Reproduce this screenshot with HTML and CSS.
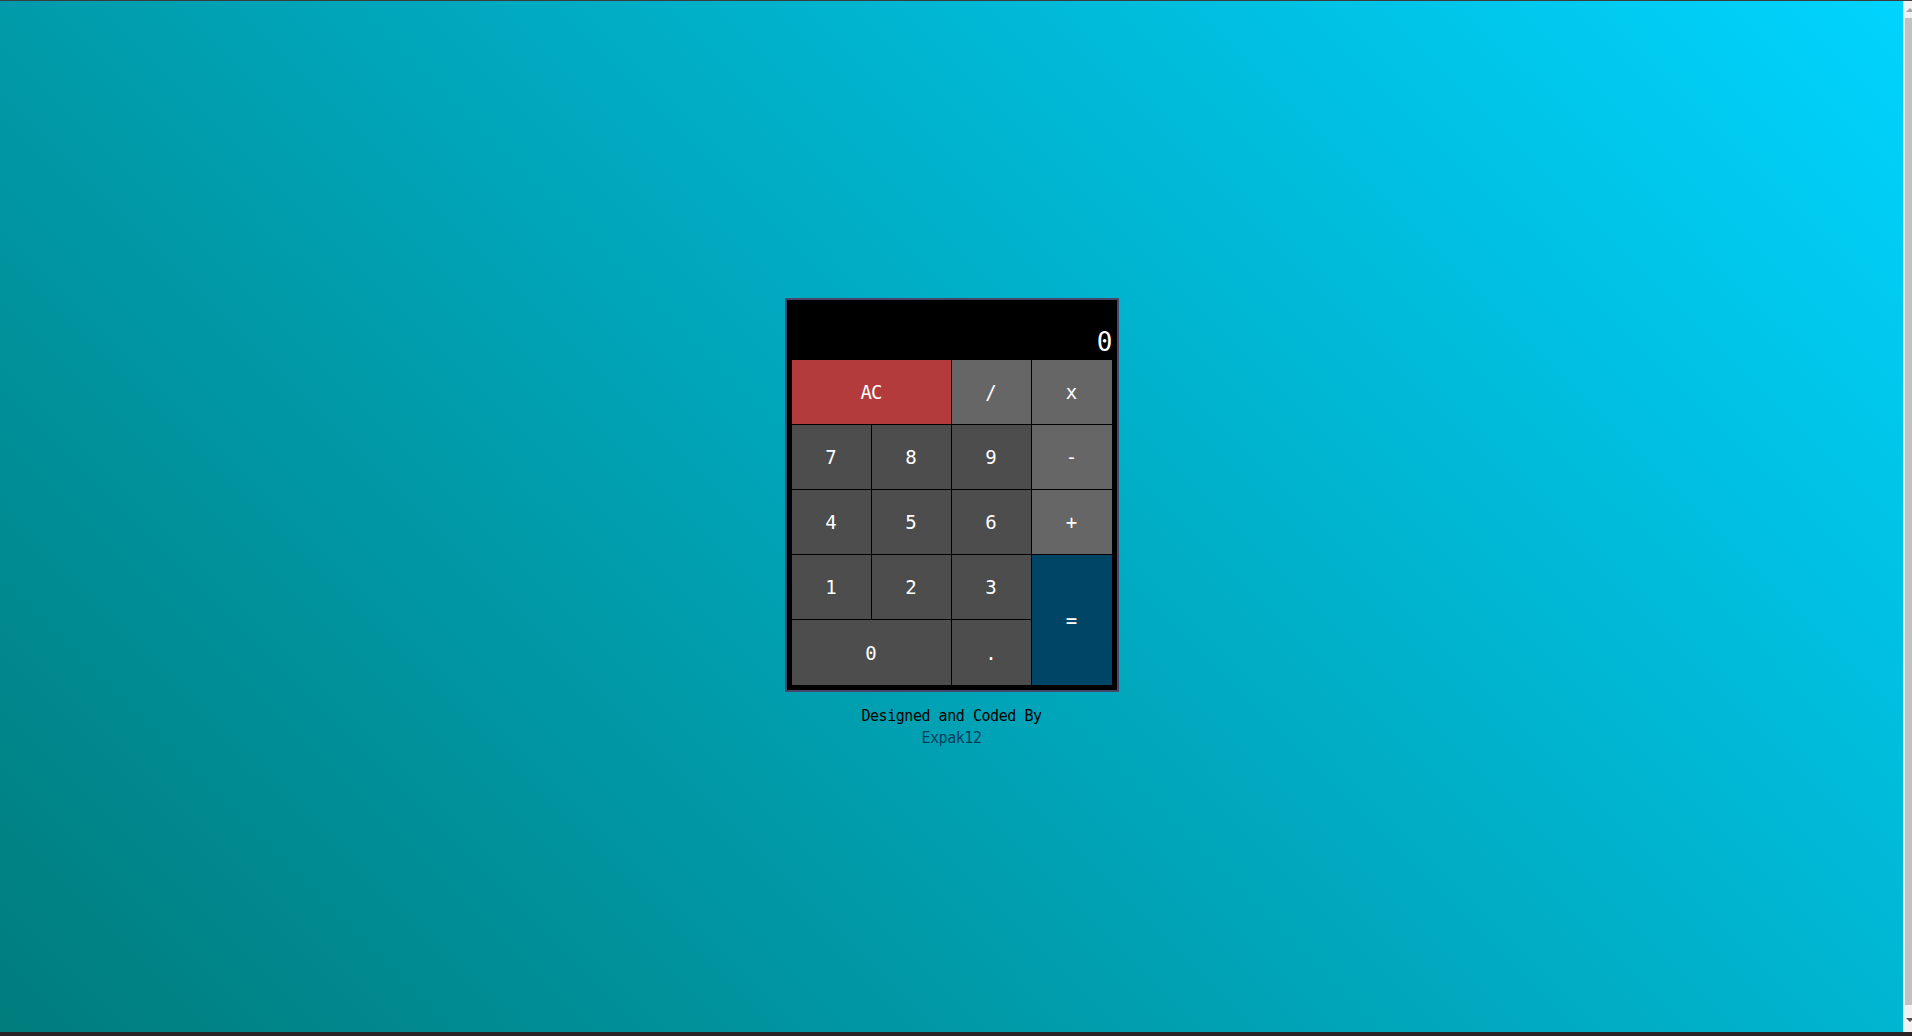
FILE: index.html
```html
<!DOCTYPE html>
<html lang="en">
<head>
<meta charset="utf-8">
<title>JavaScript Calculator</title>
<link rel="stylesheet" href="styles.css">
</head>
<body>
<div class="frame">
  <div class="page">
    <div class="calculator">
      <div class="formula-screen"></div>
      <div class="output-screen">0</div>
      <div class="keys">
        <button class="key key-clear key-wide">AC</button>
        <button class="key key-op">/</button>
        <button class="key key-op">x</button>
        <button class="key">7</button>
        <button class="key">8</button>
        <button class="key">9</button>
        <button class="key key-op">-</button>
        <button class="key">4</button>
        <button class="key">5</button>
        <button class="key">6</button>
        <button class="key key-op">+</button>
        <button class="key">1</button>
        <button class="key">2</button>
        <button class="key">3</button>
        <button class="key key-equals">=</button>
        <button class="key key-wide">0</button>
        <button class="key">.</button>
      </div>
    </div>
    <div class="author">Designed and Coded By<br><a class="author-link" href="#">Expak12</a></div>
  </div>
  <div class="scrollbar">
    <div class="scroll-arrow scroll-up"></div>
    <div class="scroll-thumb"></div>
    <div class="scroll-arrow scroll-down"></div>
  </div>
</div>
</body>
</html>
```
FILE: styles.css
```css
html, body {
  margin: 0;
  height: 100%;
}
body {
  background: linear-gradient(45deg, #007c7c 0%, #00d4ff 100%);
  font-family: "DejaVu Sans Mono", "Liberation Mono", monospace;
  box-sizing: border-box;
  border-top: 1px solid #3c3c3c;
  border-bottom: 4px solid #2a2427;
  overflow: hidden;
}
.frame {
  display: flex;
  height: 100%;
}
.page {
  flex: 1;
  padding-top: 297px;
  display: flex;
  flex-direction: column;
  align-items: center;
}
.scrollbar {
  width: 9px;
  background: #f1f1f1;
  display: flex;
  flex-direction: column;
  align-items: flex-end;
}
.scroll-arrow {
  width: 9px;
  height: 17px;
  position: relative;
}
.scroll-up::after {
  content: "";
  position: absolute;
  left: 3px;
  top: 7px;
  border-left: 4px solid transparent;
  border-right: 4px solid transparent;
  border-bottom: 4px solid #a3a3a3;
}
.scroll-down::after {
  content: "";
  position: absolute;
  left: 3px;
  top: 3px;
  border-left: 4px solid transparent;
  border-right: 4px solid transparent;
  border-top: 4px solid #505050;
}
.scroll-thumb {
  flex: 1;
  width: 7px;
  margin-bottom: 10px;
  background: #c1c1c1;
}
.calculator {
  width: 320px;
  padding: 5px;
  background: #000;
  border: 2px solid #47476b;
}
.formula-screen {
  height: 20px;
  color: orange;
  font-size: 20px;
  line-height: 20px;
  text-align: right;
}
.output-screen {
  height: 35px;
  color: #fff;
  font-size: 26px;
  line-height: 35px;
  text-align: right;
  margin-right: -1px;
}
.keys {
  display: grid;
  grid-template-columns: 79px 79px 79px 80px;
  grid-template-rows: 64px 64px 64px 64px 65px;
  gap: 1px;
  background: #000;
}
.key {
  border: none;
  margin: 0;
  padding: 0;
  background: #4d4d4d;
  color: #fff;
  font-family: "DejaVu Sans Mono", "Liberation Mono", monospace;
  font-size: 19px;
  cursor: pointer;
}
.key-wide {
  grid-column: span 2;
}
.key-clear {
  background: #b33b3b;
  letter-spacing: -1px;
}
.key-op {
  background: #666666;
}
.key-equals {
  background: #004466;
  grid-row: span 2;
}
.author {
  margin-top: 13px;
  text-align: center;
  font-size: 15px;
  line-height: 22px;
  letter-spacing: -0.45px;
  color: #000;
}
.author-link {
  color: #00405e;
  text-decoration: none;
}
```
